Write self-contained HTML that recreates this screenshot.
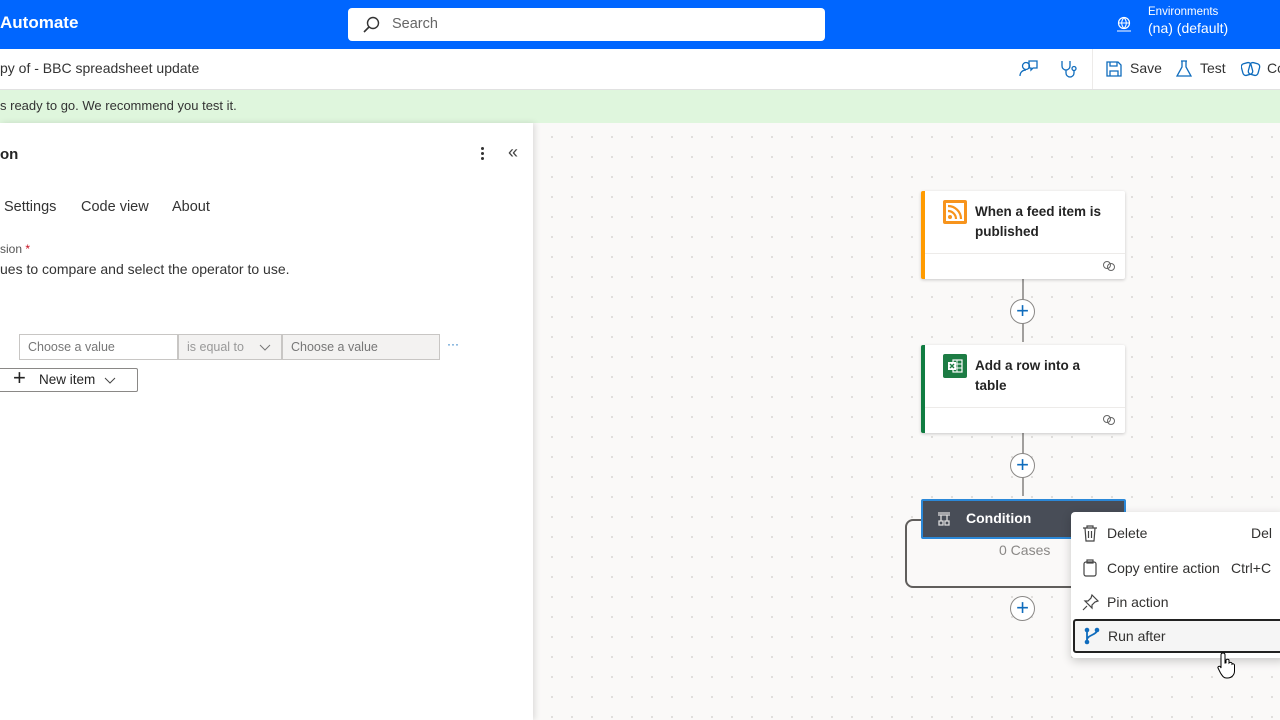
<!DOCTYPE html>
<html><head><meta charset="utf-8"><style>
*{box-sizing:border-box;margin:0;padding:0}
body{width:1280px;height:720px;overflow:hidden;font-family:"Segoe UI","Liberation Sans",sans-serif;background:#faf9f8;position:relative;color:#242424}
.abs{position:absolute}
#hdr{left:0;top:0;width:1280px;height:49px;background:#0066ff;color:#fff}
#sub{left:0;top:49px;width:1280px;height:41px;background:#fff;border-bottom:1px solid #e1e1e1}
#ban{left:0;top:90px;width:1280px;height:33px;background:#dff6dd;font-size:13px;color:#333}
#canvas{left:533px;top:123px;width:747px;height:597px;background-color:#faf9f8;background-image:radial-gradient(circle,#d2d0ce 0.7px,transparent 1.1px);background-size:20px 20px;background-position:9px 4px}
#panel{left:0;top:123px;width:533px;height:597px;background:#fff;box-shadow:2px 0 6px rgba(0,0,0,.12)}
.card{position:absolute;left:921px;width:204px;background:#fff;box-shadow:0 1px 3px rgba(0,0,0,.2);border-radius:2px}
.card .t{position:absolute;left:50px;top:11px;font-size:13.5px;font-weight:600;line-height:20px;color:#242424}
.card .f{position:absolute;left:0;right:0;bottom:0;height:26px;border-top:1px solid #edebe9}
.plus{position:absolute;width:25px;height:25px;border-radius:50%;background:#fff;border:1px solid #8a8886;color:#0f6cbd;font-size:22px;line-height:21px;text-align:center;font-weight:300}
.vl{position:absolute;width:2px;background:#a19f9d;left:1022px}
.mi{position:absolute;left:0;right:0;height:34px;font-size:14px;color:#323130;line-height:34px}
.inp{position:absolute;top:334px;height:26px;border:1px solid #c8c6c4;font-size:12.5px;color:#777;line-height:24px;padding-left:8px}
</style></head><body>
<div id="hdr" class="abs">
 <div class="abs" style="left:0;top:13px;font-size:17px;font-weight:600">Automate</div>
 <div class="abs" style="left:348px;top:8px;width:477px;height:33px;background:#fff;border-radius:4px">
  <svg class="abs" style="left:14px;top:8px" width="18" height="18" viewBox="0 0 18 18"><circle cx="11" cy="7" r="5.5" fill="none" stroke="#333" stroke-width="1.4"/><path d="M7 11L2 16" stroke="#333" stroke-width="1.6"/></svg>
  <div class="abs" style="left:44px;top:8px;font-size:14.5px;color:#666">Search</div>
 </div>
 <svg class="abs" style="left:1115px;top:16px" width="18" height="16" viewBox="0 0 18 16"><circle cx="9" cy="7" r="5.5" fill="none" stroke="#fff" stroke-width="1.2"/><path d="M3.5 7h11M9 1.5c-3 3.5-3 7.5 0 11M9 1.5c3 3.5 3 7.5 0 11M2 15h14" stroke="#fff" stroke-width="1.1" fill="none"/></svg>
 <div class="abs" style="left:1148px;top:6px;font-size:11.5px">Environments</div>
 <div class="abs" style="left:1148px;top:20px;font-size:14px">(na) (default)</div>
</div>
<div id="sub" class="abs">
 <div class="abs" style="left:0;top:11px;font-size:14px;color:#333">py of - BBC spreadsheet update</div>
 <svg class="abs" style="left:1019px;top:10px" width="20" height="20" viewBox="0 0 20 20" fill="none" stroke="#0f6cbd" stroke-width="1.3"><circle cx="7" cy="7" r="3.5"/><path d="M1 17c0-4 3-6 6-6M10 2h8v7h-4l-2 2v-2h-2z"/></svg>
 <svg class="abs" style="left:1060px;top:10px" width="20" height="20" viewBox="0 0 20 20" fill="none" stroke="#0f6cbd" stroke-width="1.3"><path d="M2 2v5a4 4 0 0 0 8 0V2M6 11v3a4 4 0 0 0 8 0v-2"/><circle cx="14" cy="9.5" r="2"/></svg>
 <div class="abs" style="left:1092px;top:0;width:1px;height:40px;background:#edebe9"></div>
 <svg class="abs" style="left:1106px;top:12px" width="16" height="16" viewBox="0 0 16 16" fill="none" stroke="#0f6cbd" stroke-width="1.3"><path d="M1 1h11l3 3v11H1zM4 1v4h7V1M4 15v-5h8v5"/></svg>
 <div class="abs" style="left:1130px;top:11px;font-size:14px;color:#333">Save</div>
 <svg class="abs" style="left:1176px;top:11px" width="16" height="18" viewBox="0 0 16 18" fill="none" stroke="#0f6cbd" stroke-width="1.3"><path d="M5 1h6M6 1v6L1 16h14L10 7V1"/></svg>
 <div class="abs" style="left:1200px;top:11px;font-size:14px;color:#333">Test</div>
 <svg class="abs" style="left:1241px;top:11px" width="20" height="18" viewBox="0 0 20 18" fill="none" stroke="#0f6cbd" stroke-width="1.3"><rect x="1" y="3" width="10" height="12" rx="3" transform="rotate(-15 6 9)"/><rect x="8" y="3" width="10" height="12" rx="3" transform="rotate(15 13 9)"/></svg>
 <div class="abs" style="left:1267px;top:11px;font-size:14px;color:#333">Co</div>
</div>
<div id="ban" class="abs"><div class="abs" style="left:0;top:8px">s ready to go. We recommend you test it.</div></div>
<div id="canvas" class="abs"></div>
<div id="panel" class="abs">
 <div class="abs" style="left:0;top:23px;font-size:15px;font-weight:600">on</div>
 <div class="abs" style="left:481px;top:24px;width:3px;height:3px;background:#333;border-radius:50%;box-shadow:0 5px 0 #333,0 10px 0 #333"></div>
 <div class="abs" style="left:508px;top:19px;font-size:18px;color:#444">«</div>
 <div class="abs" style="left:4px;top:76px;font-size:14.5px;color:#333">Settings</div>
 <div class="abs" style="left:81px;top:76px;font-size:14.5px;color:#333">Code view</div>
 <div class="abs" style="left:172px;top:76px;font-size:14.5px;color:#333">About</div>
 <div class="abs" style="left:0;top:119px;font-size:12px;color:#555">sion <span style="color:#c50f1f">*</span></div>
 <div class="abs" style="left:0;top:138px;font-size:14px;color:#333">ues to compare and select the operator to use.</div>
</div>
<div class="inp" style="left:19px;width:159px;background:#fff">Choose a value</div>
<div class="inp" style="left:178px;width:104px;background:#f3f2f1;color:#999">is equal to <svg style="position:absolute;left:80px;top:9px" width="12" height="8" viewBox="0 0 12 8"><path d="M1 1l5 5 5-5" stroke="#777" fill="none"/></svg></div>
<div class="inp" style="left:282px;width:158px;background:#f3f2f1">Choose a value</div>
<div class="abs" style="left:447px;top:337px;color:#0f6cbd;font-size:12px">···</div>
<div class="abs" style="left:0;top:368px;width:138px;height:24px;border:1px solid #8a8886;border-left:none;border-radius:0 2px 2px 0;background:#fff;font-size:13.5px;line-height:22px;color:#242424">
 <span style="position:absolute;left:13px;top:-2px;font-size:22px;font-weight:300">+</span><span style="position:absolute;left:39px">New item</span><svg style="position:absolute;left:104px;top:8px" width="12" height="8" viewBox="0 0 12 8"><path d="M1 1l5 5 5-5" stroke="#444" fill="none"/></svg></div>

<div class="vl" style="top:278px;height:64px"></div>
<div class="vl" style="top:432px;height:64px"></div>
<div class="card" style="top:191px;height:88px;border-left:4px solid #ff9b00">
 <div class="abs" style="left:18px;top:9px;width:24px;height:24px;background:#f7941d;border-radius:2px"><svg width="24" height="24" viewBox="0 0 24 24"><rect x="3" y="3" width="18" height="18" fill="#fff"/><circle cx="7" cy="17" r="2" fill="#f7941d"/><path d="M5 11a8 8 0 0 1 8 8M5 6a13 13 0 0 1 13 13" stroke="#f7941d" stroke-width="2.2" fill="none"/></svg></div>
 <div class="t">When a feed item is<br>published</div>
 <div class="f"><svg style="position:absolute;right:9px;top:7px" width="14" height="10" viewBox="0 0 14 10" fill="none" stroke="#666"><circle cx="5" cy="4" r="3.5"/><circle cx="9" cy="6" r="3.5"/></svg></div>
</div>
<div class="card" style="top:345px;height:88px;border-left:4px solid #107c41">
 <div class="abs" style="left:18px;top:9px;width:24px;height:24px;background:#1d7c44;border-radius:2px"><svg width="24" height="24" viewBox="0 0 24 24"><rect x="10" y="6" width="9" height="12" fill="none" stroke="#fff" stroke-width="1.2"/><path d="M10 10h9M10 14h9M14 6v12" stroke="#fff" stroke-width="1"/><rect x="5" y="8" width="8" height="8" fill="#fff"/><path d="M7 10l4 4M11 10l-4 4" stroke="#1d7c44" stroke-width="1.4"/></svg></div>
 <div class="t">Add a row into a<br>table</div>
 <div class="f"><svg style="position:absolute;right:9px;top:7px" width="14" height="10" viewBox="0 0 14 10" fill="none" stroke="#666"><circle cx="5" cy="4" r="3.5"/><circle cx="9" cy="6" r="3.5"/></svg></div>
</div>
<div class="plus" style="left:1010px;top:299px">+</div>
<div class="plus" style="left:1010px;top:453px">+</div>
<div class="abs" style="left:905px;top:519px;width:240px;height:69px;border:2px solid #605e5c;border-radius:8px;background:#faf9f8"></div>
<div class="abs" style="left:999px;top:542px;font-size:14px;color:#8a8886">0 Cases</div>
<div class="abs" style="left:921px;top:499px;width:205px;height:40px;background:#484d57;border:2px solid #2b88d8;border-radius:2px">
 <svg class="abs" style="left:14px;top:11px" width="14" height="14" viewBox="0 0 14 14" fill="none" stroke="#ddd" stroke-width="1.3"><path d="M1 1h12M1 3h12M4 3v6M10 3v6M2 9h4v4H2zM8 9h4v4H8z"/></svg>
 <div class="abs" style="left:43px;top:9px;color:#fff;font-size:14px;font-weight:600">Condition</div>
</div>
<div class="plus" style="left:1010px;top:596px">+</div>
<div class="abs" style="left:1071px;top:512px;width:215px;height:146px;background:#fff;box-shadow:0 3px 10px rgba(0,0,0,.2);border-radius:4px">
 <div class="mi" style="top:4px"><svg class="abs" style="left:11px;top:9px" width="16" height="17" viewBox="0 0 16 17" fill="none" stroke="#444" stroke-width="1.2"><path d="M1 3h14M5 3V1h6v2M3 3l1 13h8l1-13M6.5 6v7M9.5 6v7"/></svg><span style="position:absolute;left:36px">Delete</span><span style="position:absolute;left:180px">Del</span></div>
 <div class="mi" style="top:39px"><svg class="abs" style="left:12px;top:8px" width="14" height="18" viewBox="0 0 14 18" fill="none" stroke="#444" stroke-width="1.2"><rect x="1" y="3" width="12" height="14" rx="2"/><rect x="4" y="1" width="6" height="3"/></svg><span style="position:absolute;left:36px">Copy entire action</span><span style="position:absolute;left:160px">Ctrl+C</span></div>
 <div class="mi" style="top:73px"><svg class="abs" style="left:11px;top:9px" width="17" height="17" viewBox="0 0 17 17" fill="none" stroke="#444" stroke-width="1.2"><path d="M10 1l6 6-3 1-3 3 0 3-7-7 3 0 3-3zM5 12l-4 4"/></svg><span style="position:absolute;left:36px">Pin action</span></div>
 <div class="mi" style="top:107px;left:2px;border:2px solid #222;border-radius:3px;background:#f5f5f5;line-height:30px"><svg class="abs" style="left:9px;top:6px" width="16" height="18" viewBox="0 0 16 18" fill="#0f6cbd"><circle cx="3" cy="3" r="2.3"/><circle cx="13" cy="3" r="2.3"/><circle cx="3" cy="15" r="2.3"/><path d="M3 3v12M13 3c0 5-10 5-10 10" stroke="#0f6cbd" stroke-width="1.8" fill="none"/></svg><span style="position:absolute;left:33px">Run after</span></div>
</div>
<svg class="abs" style="left:1216px;top:651px" width="22" height="28" viewBox="0 0 22 28"><path d="M7 2c1.2 0 2 .8 2 2v8l1-.2V9c1-1 2.5-1 3 0v3c1-1 2.5-.8 3 .2v1c1-.8 2.5-.3 2.5 1V20c0 4-3 7-7 7h-1c-3 0-4-2-6-5L2 17c-.5-1 1-2.5 2.5-1.2L5 17V4c0-1.2.8-2 2-2z" fill="#fff" stroke="#000" stroke-width="1"/></svg>
</body></html>
